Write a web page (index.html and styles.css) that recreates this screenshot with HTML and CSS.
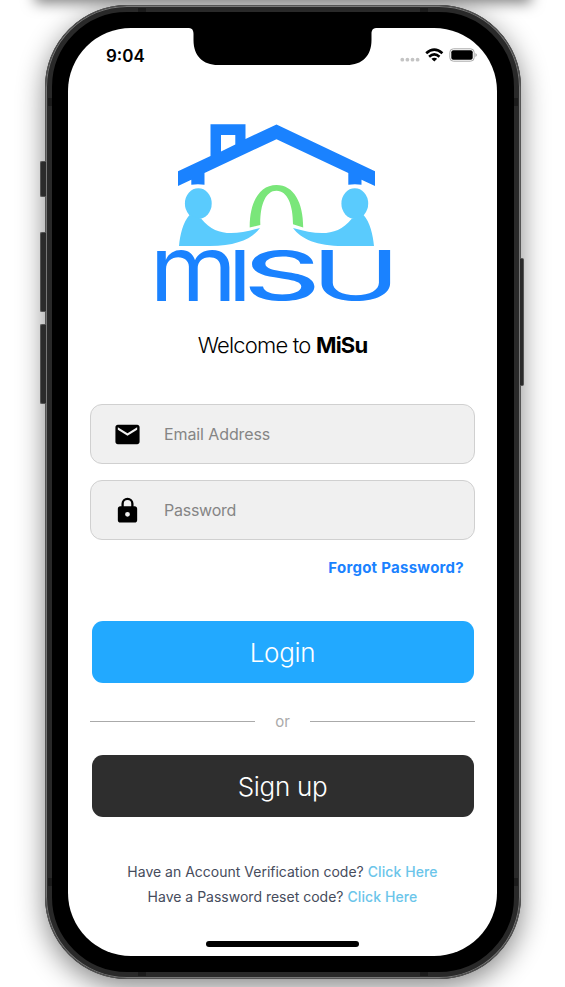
FILE: index.html
```html
<!DOCTYPE html>
<html lang="en">
<head>
<meta charset="utf-8">
<title>MiSu</title>
<link rel="stylesheet" href="styles.css">
</head>
<body>
<div class="top-shade"></div>
<div class="phone">
  <i class="key mute"></i><i class="key vol-up"></i><i class="key vol-down"></i><i class="key power"></i>
  <i class="band band-tl"></i><i class="band band-tr"></i><i class="band band-bl"></i><i class="band band-br"></i>
  <i class="band side-tl"></i><i class="band side-tr"></i><i class="band side-bl"></i><i class="band side-br"></i>
  <main class="screen">
    <svg class="notch" width="187" height="38" viewBox="0 0 187 38"><path d="M0 0C3 .2 4.500 2 4.500 6V12C4.500 28 14 37 29 37H158C173 37 182.500 28 182.500 12V6C182.500 2 184 .2 187 0Z"/></svg>
    <header class="status">
      <span class="time">9:04</span>
      <svg class="indicators" width="78" height="18" viewBox="399 46 78 18">
        <g fill="#c4c4c4"><circle cx="402.300" cy="59.700" r="1.900"/><circle cx="407.400" cy="59.700" r="1.900"/><circle cx="412.500" cy="59.700" r="1.900"/><circle cx="417.600" cy="59.700" r="1.900"/></g>
        <g fill="none" stroke="#000" stroke-width="2.600"><path d="M426.200 53.300Q434.300 45.800 442.400 53.300"/><path d="M429.100 56.700Q434.300 52.100 439.500 56.700"/></g>
        <path d="M431.400 58.800Q434.300 56.500 437.200 58.800L434.300 61.600Z"/>
        <rect x="449.800" y="48.800" width="24.400" height="12.400" rx="3.600" fill="#fff" stroke="#aaa"/>
        <rect x="451.300" y="50.300" width="21.400" height="9.400" rx="2"/>
        <path d="M475.500 53Q478 55 475.500 57Z" fill="#999"/>
      </svg>
    </header>
    <svg class="logo" width="250" height="190" viewBox="150 115 250 190" role="img" aria-label="MiSu">
      <g fill="#1a82ff">
        <path fill-rule="evenodd" d="M210.500 124.200H245.500V139L276.500 124.400 375 171.300V186L361.500 179.700V184.700Q355 183.700 348.300 184.700V173L276.500 139.200 204.500 173V184.700Q198 183.700 191.300 184.700V179.700L178 186V171.300L210.500 156ZM221 135V151.500L235.300 144.500V135Z"/>
      </g>
      <g fill="#5acbfd">
        <ellipse cx="198.300" cy="203.600" rx="13.400" ry="15.300"/>
        <path d="M189.500 215C183 222 180 235 179 246H210C236 246 252 239 260 228C235 235 216 237 201.500 219Z"/>
        <ellipse cx="354.800" cy="203.600" rx="13.400" ry="15.300"/>
        <path d="M363.600 215C370 222 373 235 374 246H343C317 246 301 239 293 228C318 235 337 237 351.500 219Z"/>
      </g>
      <path fill="#7ae67a" d="M249.700 227.500C249.500 203 259 185 276.500 185S303.300 203 303.200 227.500L293 224.200C293 205 287.500 190.800 276.500 190.800S260 205 260.300 225Z"/>
      <g class="wordmark">
        <text transform="translate(149.500 300.500) scale(1 .91)" font-size="100">m</text>
        <text transform="translate(227 300.500) scale(1.380 1)" font-size="69.500">I</text>
        <text class="heavy" transform="translate(243.500 300) scale(1.780 1)" font-size="67">S</text>
        <text transform="translate(311 300) scale(1.760 1)" font-size="68.500">U</text>
      </g>
    </svg>
    <h1 class="welcome">Welcome to <b>MiSu</b></h1>
    <form class="form">
      <label class="field">
        <svg width="29" height="29" viewBox="0 0 24 24"><path d="M20 4H4c-1.100 0-2 .9-2 2v12c0 1.100.9 2 2 2h16c1.100 0 2-.9 2-2V6c0-1.100-.9-2-2-2zm0 4-8 5-8-5V6l8 5 8-5z"/></svg>
        <span class="hint email">Email Address</span>
      </label>
      <label class="field">
        <svg width="29" height="29" viewBox="0 0 24 24"><path fill-rule="evenodd" d="M18 8.500h-1v-2a5 5 0 0 0-10 0v2H6c-1.100 0-2 .9-2 2V20c0 1.100.9 2 2 2h12c1.100 0 2-.9 2-2v-9.500c0-1.100-.9-2-2-2zm-6 8.700a2 2 0 1 1 0-4 2 2 0 0 1 0 4zm3.100-8.700H8.900v-2a3.100 3.100 0 0 1 6.200 0z"/></svg>
        <span class="hint password">Password</span>
      </label>
      <a class="forgot">Forgot Password?</a>
      <div class="button login"><span>Login</span></div>
      <div class="divider"><span>or</span></div>
      <div class="button signup"><span>Sign up</span></div>
    </form>
    <footer class="codes">
      <p class="verify">Have an Account Verification code? <a>Click Here</a></p>
      <p class="reset">Have a Password reset code? <a>Click Here</a></p>
    </footer>
    <div class="home"></div>
  </main>
</div>
</body>
</html>
```
FILE: styles.css
```css
* { box-sizing: border-box; }
body {
  margin: 0;
  width: 565px;
  height: 987px;
  overflow: hidden;
  background: #fff;
  font-family: Inter, "Liberation Sans", sans-serif;
  color: #000;
}
.top-shade {
  position: absolute;
  left: 38px;
  top: -12px;
  width: 490px;
  height: 12px;
  box-shadow: 0 0 14px 3px rgba(0, 0, 0, .5);
}
.phone {
  position: relative;
  width: 476px;
  height: 974px;
  margin: 5px 0 0 45px;
  padding: 16px;
  border: 7px solid #292929;
  border-radius: 82px;
  background: #000;
  box-shadow: 0 8px 28px rgba(0, 0, 0, .48);
}
.phone::before {
  content: "";
  position: absolute;
  inset: -7px;
  border: 1px solid #555;
  border-radius: 82px;
  box-shadow: inset 0 0 0 1px #777;
}
.key {
  position: absolute;
  left: -12px;
  width: 6px;
  background: #2b2b2b;
  border: 1px solid #555;
  border-right: 0;
  border-radius: 2px 0 0 2px;
}
.mute { top: 149px; height: 36px; }
.vol-up { top: 220px; height: 80px; }
.vol-down { top: 312px; height: 80px; }
.power {
  left: auto;
  right: -10px;
  width: 4px;
  top: 246px;
  height: 128px;
  border: 1px solid #555;
  border-left: 0;
  border-radius: 0 2px 2px 0;
}
.band { position: absolute; background: #1b1b1b; width: 8px; height: 4px; }
.band-tl { left: 86px; top: -4px; }
.band-tr { right: 86px; top: -4px; }
.band-bl { left: 86px; bottom: -4px; }
.band-br { right: 86px; bottom: -4px; }
.side-tl, .side-tr, .side-bl, .side-br { width: 4px; height: 8px; }
.side-tl { left: -4px; top: 86px; }
.side-tr { right: -4px; top: 86px; }
.side-bl { left: -4px; bottom: 86px; }
.side-br { right: -4px; bottom: 86px; }
.screen {
  position: relative;
  display: flex;
  flex-direction: column;
  width: 429px;
  height: 928px;
  padding: 0 22px;
  border-radius: 63px;
  background: #fff;
  overflow: hidden;
}
.notch { position: absolute; left: 121px; top: 0; }
.status {
  display: flex;
  justify-content: space-between;
  align-items: center;
  height: 54px;
  padding: 0 0 0 16px;
}
.indicators { margin-right: -2px; }
.time { padding-top: 1px; font-size: 17px; font-weight: 600; }
.logo { display: block; margin: 33px 0 0 60px; overflow: visible; }
.wordmark { fill: #1a82ff; font-family: Inter, sans-serif; font-weight: 400; }
.wordmark .heavy { font-weight: 500; }
.welcome {
  margin: 25px 0 0;
  height: 30px;
  line-height: 30px;
  font-size: 22px;
  font-weight: 300;
  letter-spacing: -.8px;
  text-align: center;
  white-space: nowrap;
}
.welcome b { font-weight: 700; }
.form { display: flex; flex-direction: column; margin-top: 44px; }
.field {
  display: flex;
  align-items: center;
  gap: 22px;
  height: 60px;
  margin-bottom: 16px;
  padding-left: 22px;
  border: 1px solid #d0d0d0;
  border-radius: 12px;
  background: #f0f0f0;
}
.hint { font-size: 16px; color: #858585; }
.email { letter-spacing: -.1px; }
.password { letter-spacing: -.25px; }
.forgot {
  align-self: flex-end;
  height: 24px;
  margin: 0 11px 0 0;
  line-height: 24px;
  font-size: 15px;
  font-weight: 700;
  letter-spacing: .27px;
  color: #1a82ff;
}
.button {
  display: flex;
  align-items: center;
  justify-content: center;
  height: 62px;
  margin: 0 1.5px;
  border-radius: 11px;
  color: #fff;
  font-size: 26px;
  font-weight: 300;
  letter-spacing: -.3px;
}
.login { margin-top: 41px; background: #22a9ff; }
.signup { background: #2e2e2e; }
.divider {
  display: flex;
  align-items: center;
  gap: 20px;
  height: 72px;
  padding-top: 5px;
  font-size: 15px;
  color: #aaa;
}
.divider span { width: 15px; text-align: center; }
.divider::before, .divider::after { content: ""; flex: 1; height: 1px; background: #aaa; }
.codes { margin-top: 42px; text-align: center; font-size: 14px; color: #464c5c; }
.codes p { margin: 0; height: 25px; line-height: 25px; white-space: nowrap; }
.codes a { color: #6bc5ea; font-weight: 500; letter-spacing: .1px; }
.home {
  align-self: center;
  width: 153px;
  height: 6px;
  margin: 32px 0 0;
  border-radius: 3px;
  background: #000;
}
```
